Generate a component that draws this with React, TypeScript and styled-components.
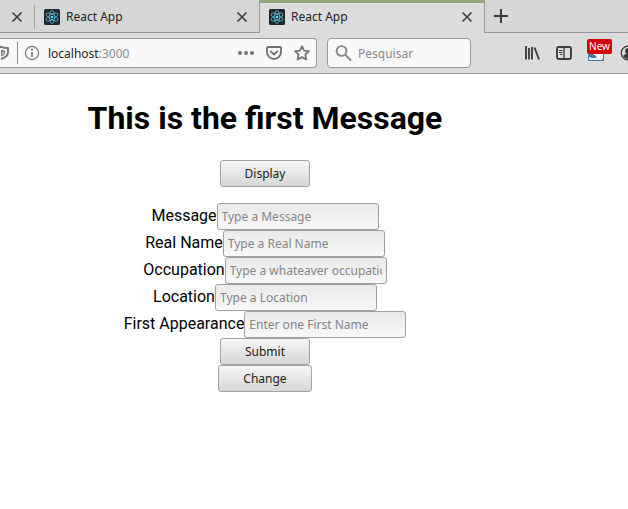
import React from 'react';
import styled, { createGlobalStyle } from 'styled-components';

const GlobalStyle = createGlobalStyle`
  * { box-sizing: border-box; }
  body { margin: 0; background: #fff; overflow: hidden; }
`;

const Window = styled.div`
  width: 628px;
  height: 509px;
  overflow: hidden;
  background: #fff;
  font-family: 'Noto Sans', sans-serif;
  font-size: 12px;
  color: #222;
`;

const TabStrip = styled.div`
  display: flex;
  height: 33px;
  background: #d6d6d6;
`;

const Tab = styled.div<{ $width: number; $active?: boolean }>`
  display: flex;
  align-items: center;
  flex: none;
  width: ${(p) => p.$width}px;
  height: 33px;
  padding: ${(p) => (p.$active ? '0 11px 2px 9px' : '1px 11px 0 9px')};
  background: ${(p) => (p.$active ? '#dcdcdc' : '#d6d6d6')};
  border: 0 solid #979797;
  border-width: ${(p) => (p.$active ? '3px 1px 0' : '0 0 1px')};
  border-top-color: #91a77c;
`;

const TabTitle = styled.span`
  flex: 1;
  margin-left: 6px;
  line-height: 16px;
`;

const Separator = styled.div`
  flex: none;
  width: 1px;
  height: 33px;
  border-bottom: 1px solid #979797;
  background: linear-gradient(#d6d6d6 5px, #a0a0a0 5px, #a0a0a0 29px, #d6d6d6 29px);
`;

const TabRest = styled.div`
  flex: 1;
  height: 33px;
  padding: 9px 0 0 9px;
  border-bottom: 1px solid #979797;
`;

const Toolbar = styled.div`
  display: flex;
  height: 41px;
  padding-top: 5px;
  background: #dcdcdc;
  border-bottom: 1px solid #999;
`;

const AddressBar = styled.div`
  display: flex;
  align-items: center;
  flex: none;
  width: 317px;
  height: 30px;
  padding-right: 6px;
  background: #f9f9f9;
  border: 1px solid #969696;
  border-left: 0;
  border-radius: 0 4px 4px 0;
`;

const ShieldSlot = styled.div`
  display: flex;
  align-items: center;
  width: 18px;
  height: 22px;
  margin-right: 6px;
  border-right: 1px solid #8c8c8c;
`;

const Address = styled.span`
  flex: 1;
  margin-left: 8px;
  padding-top: 1px;
  line-height: 17px;
  color: #222;
`;

const Port = styled.span`
  color: #8c8c8c;
`;

const AddressActions = styled.div`
  display: flex;
  align-items: center;
  gap: 12px;
`;

const SearchBar = styled.div`
  display: flex;
  align-items: center;
  gap: 6px;
  flex: none;
  width: 144px;
  height: 30px;
  margin-left: 10px;
  padding-left: 7px;
  background: #f9f9f9;
  border: 1px solid #969696;
  border-radius: 4px;
  color: #888;
`;

const Tools = styled.div`
  display: flex;
  align-items: center;
  gap: 16px;
  height: 30px;
  margin-left: 53px;
`;

const Extension = styled.div`
  position: relative;
  width: 16px;
  height: 16px;
`;

const Badge = styled.span`
  position: absolute;
  top: -6px;
  left: -1px;
  width: 25px;
  height: 15px;
  border-radius: 2px;
  background: #d70000;
  color: #fff;
  font-size: 10px;
  line-height: 14px;
  text-align: center;
`;

const Icon = styled.svg`
  display: block;
  flex: none;
  overflow: visible;
`;

const Page = styled.main`
  display: flex;
  flex-direction: column;
  align-items: center;
  width: 530px;
  padding-top: 25px;
  font-family: Roboto, sans-serif;
  font-size: 16px;
  color: #000;
`;

const Heading = styled.h1`
  margin: 0 0 23px;
  font-size: 32px;
  line-height: 38px;
  font-weight: 700;
  white-space: nowrap;
`;

const Button = styled.button<{ $width?: number }>`
  width: ${(p) => p.$width ?? 90}px;
  height: 27px;
  padding: 0;
  border: 1px solid #a3a3a3;
  border-radius: 3px;
  background: linear-gradient(#f6f6f6, #d6d6d6);
  font: 12px 'Noto Sans', sans-serif;
  color: #222;
`;

const Form = styled.form`
  display: flex;
  flex-direction: column;
  align-items: center;
  margin-top: 16px;
`;

const Field = styled.label`
  display: flex;
  height: 27px;
  line-height: 25px;
  white-space: nowrap;
`;

const Input = styled.input`
  width: 162px;
  height: 27px;
  padding: 0 4px 1px;
  border: 1px solid #a0a0a0;
  border-radius: 3px;
  background: linear-gradient(#e9e9e9, #f8f8f8);
  font: 12px 'Noto Sans', sans-serif;
  color: #222;
  outline: none;
  &::placeholder { color: #858585; opacity: 1; }
`;

const CloseIcon = () => (
  <Icon width="12" height="12" viewBox="0 0 12 12" fill="none" stroke="#404040" strokeWidth="1.7">
    <path d="M1.5 1.5l9 9M10.5 1.5l-9 9" />
  </Icon>
);

const ReactIcon = () => (
  <Icon width="16" height="16" viewBox="0 0 16 16">
    <rect width="16" height="16" rx="1.5" fill="#20262b" />
    <g fill="none" stroke="#53b6cf" strokeWidth=".85">
      {[30, 90, 150].map((angle) => (
        <ellipse key={angle} cx="8" cy="8" rx="6.6" ry="2.6" transform={`rotate(${angle} 8 8)`} />
      ))}
    </g>
    <circle cx="8" cy="8" r="1.3" fill="#61dafb" />
  </Icon>
);

const ShieldIcon = () => (
  <Icon width="9" height="16" viewBox="0 0 9 16">
    <path d="M-5 3Q-1 3 1 1.8Q4 3 8 3V7Q8 12 1 14" fill="none" stroke="#747474" strokeWidth="1.9" strokeLinejoin="round" />
    <path d="M1 4.8Q3 5.5 5 5.5V7.5Q5 10 1 11.5z" fill="#747474" />
    <path d="M3 6.5V8q0 1-1 1.8" fill="none" stroke="#f9f9f9" />
  </Icon>
);

const InfoIcon = () => (
  <Icon width="16" height="16" viewBox="0 0 16 16" fill="none" stroke="#747474">
    <circle cx="8" cy="8" r="6.6" strokeWidth="1.2" />
    <path d="M8 7v4.8M8 4v1.8" strokeWidth="1.7" />
  </Icon>
);

const DotsIcon = () => (
  <Icon width="16" height="16" viewBox="0 0 16 16" fill="#747474">
    <circle cx="2" cy="8" r="2" />
    <circle cx="8" cy="8" r="2" />
    <circle cx="14" cy="8" r="2" />
  </Icon>
);

const PocketIcon = () => (
  <Icon width="16" height="16" viewBox="0 0 16 16" fill="none" stroke="#747474" strokeWidth="1.9" strokeLinecap="round" strokeLinejoin="round">
    <path d="M2 2h12q1 0 1 1v4a7 7 0 0 1-14 0V3q0-1 1-1z" />
    <path d="M4.7 6.4L8 9.5l3.3-3.1" />
  </Icon>
);

const StarIcon = () => (
  <Icon width="16" height="16" viewBox="0 0 16 16" fill="none" stroke="#747474" strokeWidth="1.8" strokeLinejoin="round">
    <path d="M8 1.2l2.1 4.4 4.8.6-3.5 3.4.9 4.9L8 12.1l-4.3 2.4.9-4.9L1.1 6.2l4.8-.6z" />
  </Icon>
);

const SearchIcon = () => (
  <Icon width="17" height="17" viewBox="0 0 17 17" fill="none" stroke="#858585" strokeWidth="1.9" strokeLinecap="round">
    <circle cx="6.5" cy="6" r="4.9" />
    <path d="M10.3 9.8l5.2 5.2" />
  </Icon>
);

const PlusIcon = () => (
  <Icon width="14" height="14" viewBox="0 0 14 14" stroke="#383838" strokeWidth="2">
    <path d="M0 7h14M7 0v14" />
  </Icon>
);

const LibraryIcon = () => (
  <Icon width="16" height="16" viewBox="0 0 16 16" fill="none" stroke="#3e3e3e" strokeWidth="1.9">
    <path d="M2 1v13.5M5 3v11.5M8 2v12.5M10.5 2.5l4.5 12" />
  </Icon>
);

const SidebarIcon = () => (
  <Icon width="16" height="16" viewBox="0 0 16 16" fill="none" stroke="#3e3e3e">
    <rect x="1" y="2" width="14" height="12" rx="2" strokeWidth="1.9" />
    <path d="M8 2v12" strokeWidth="1.3" />
    <path d="M3 5.5h3.5M3 7.5h3.5M4 9.5h2.5" />
  </Icon>
);

const ExtensionIcon = () => (
  <Icon width="16" height="16" viewBox="0 0 16 16">
    <rect x=".5" y="4.5" width="15" height="11" fill="#f1f5f8" stroke="#4280ab" />
    <path d="M1 9q5-1 8 3.5-4 1-8-.5z" fill="#397aa8" />
    <path d="M12.5 16l3.5-3.5V16z" fill="#397aa8" />
  </Icon>
);

const AccountIcon = () => (
  <Icon width="16" height="16" viewBox="0 0 16 16" fill="#3e3e3e">
    <circle cx="8" cy="8" r="6.8" fill="none" stroke="#3e3e3e" strokeWidth="1.3" />
    <circle cx="8" cy="6" r="2.9" />
    <path d="M3 11q3-3 5-3t5 3q-2 3-5 3t-5-3" />
  </Icon>
);

const fields = [
  ['Message', 'Type a Message'],
  ['Real Name', 'Type a Real Name'],
  ['Occupation', 'Type a whateaver occupation'],
  ['Location', 'Type a Location'],
  ['First Appearance', 'Enter one First Name'],
];

export default function App() {
  return (
    <Window>
      <GlobalStyle />
      <TabStrip>
        <Tab $width={34}>
          <Icon width="2" height="12" />
          <CloseIcon />
        </Tab>
        <Separator />
        <Tab $width={224}>
          <ReactIcon />
          <TabTitle>React App</TabTitle>
          <CloseIcon />
        </Tab>
        <Tab $width={226} $active>
          <ReactIcon />
          <TabTitle>React App</TabTitle>
          <CloseIcon />
        </Tab>
        <TabRest><PlusIcon /></TabRest>
      </TabStrip>
      <Toolbar>
        <AddressBar>
          <ShieldSlot><ShieldIcon /></ShieldSlot>
          <InfoIcon />
          <Address>localhost<Port>:3000</Port></Address>
          <AddressActions><DotsIcon /><PocketIcon /><StarIcon /></AddressActions>
        </AddressBar>
        <SearchBar><SearchIcon />Pesquisar</SearchBar>
        <Tools>
          <LibraryIcon />
          <SidebarIcon />
          <Extension><ExtensionIcon /><Badge>New</Badge></Extension>
          <AccountIcon />
        </Tools>
      </Toolbar>
      <Page>
        <Heading>This is the first Message</Heading>
        <Button type="button">Display</Button>
        <Form onSubmit={(event) => event.preventDefault()}>
          {fields.map(([label, placeholder]) => (
            <Field key={label}>
              {label}
              <Input placeholder={placeholder} />
            </Field>
          ))}
          <Button type="submit">Submit</Button>
          <Button type="button" $width={94}>Change</Button>
        </Form>
      </Page>
    </Window>
  );
}
